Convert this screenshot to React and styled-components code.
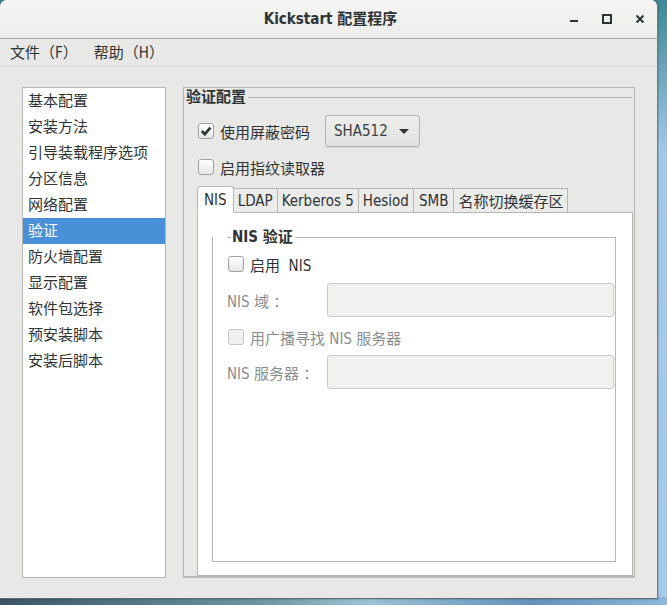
import React from "react";
import styled, { createGlobalStyle } from "styled-components";

const GlobalStyle = createGlobalStyle`
  html, body { margin: 0; padding: 0; }
  body {
    width: 667px;
    height: 605px;
    overflow: hidden;
    background:
      linear-gradient(90deg, #3b5566 0%, #6f97a6 40%, #9bc3d3 55%, #6591bd 80%, #8db8dc 100%) bottom / 100% 8px no-repeat,
      linear-gradient(180deg, #3f8796 0%, #a3c8e6 25%, #a6cae7 100%);
    font-family: "DejaVu Sans Condensed", "DejaVu Sans", "Noto Sans CJK SC", sans-serif;
    font-size: 15px;
    color: #2e3436;
  }
`;

const Window = styled.div`
  width: 658px;
  height: 599px;
  box-sizing: border-box;
  background: #e8e8e7;
  border-radius: 7px 7px 0 0;
  border-right: 1px solid #6f7f88;
  border-bottom: 1px solid #5d6d76;
  box-shadow: 0 0 2px rgba(0, 0, 0, 0.45);
  display: flex;
  flex-direction: column;
  overflow: hidden;
`;

const TitleBar = styled.div`
  height: 38px;
  flex: none;
  display: grid;
  grid-template-columns: 1fr auto 1fr;
  align-items: center;
  background: linear-gradient(#f5f5f4, #ededec);
  border-bottom: 1px solid #a4a4a2;
`;

const Title = styled.div`
  grid-column: 2;
  font-weight: bold;
  font-size: 15px;
  line-height: 18px;
  padding-left: 4px;
`;

const Controls = styled.div`
  justify-self: end;
  display: flex;
  padding-right: 1px;
`;

const Control = styled.div`
  width: 33px;
  height: 38px;
  display: flex;
  align-items: center;
  justify-content: center;
`;

const MenuBar = styled.div`
  height: 27px;
  flex: none;
  display: flex;
  align-items: center;
  padding-left: 2px;
  border-bottom: 1px solid #d6d6d4;
`;

const MenuItem = styled.div`
  padding: 0 8px;
  line-height: 20px;
`;

const Content = styled.div`
  flex: 1;
  min-height: 0;
  display: flex;
  gap: 17px;
  padding: 20px 22px 20px 22px;
`;

const SideList = styled.div`
  width: 144px;
  flex: none;
  box-sizing: border-box;
  background: #fff;
  border: 1px solid #b6b6b3;
`;

const SideItem = styled.div`
  height: 26px;
  line-height: 26px;
  padding-left: 5px;
  background: ${(p) => (p.$selected ? "#4a90d9" : "transparent")};
  color: ${(p) => (p.$selected ? "#fff" : "#2e3436")};
`;

const MainBox = styled.div`
  flex: 1;
  min-width: 0;
  display: flex;
  flex-direction: column;
  border: 1px solid #b6b6b3;
  border-bottom-width: 2px;
`;

const AuthFrame = styled.div`
  flex: 1;
  min-height: 0;
  display: flex;
  flex-direction: column;
  padding-left: 13px;
`;

const FrameHead = styled.div`
  display: flex;
  align-items: center;
  height: 18px;
  flex: none;
  margin: ${(p) => p.$margin || "0"};
  &::before {
    content: "";
    width: ${(p) => p.$tick || 1}px;
    border-top: 1px solid #b6b6b3;
  }
  &::after {
    content: "";
    flex: 1;
    border-top: 1px solid #b6b6b3;
  }
`;

const FrameTitle = styled.span`
  font-weight: bold;
  padding: 0 2px 0 1px;
  line-height: 18px;
`;

const Row = styled.div`
  display: flex;
  align-items: center;
  height: ${(p) => p.$h || 24}px;
  margin-top: ${(p) => p.$mt || 0}px;
  padding-left: ${(p) => p.$pl || 0}px;
  white-space: pre;
  color: ${(p) => (p.$disabled ? "#8b8e8f" : "#2e3436")};
`;

const Box = styled.span`
  width: 14px;
  height: 14px;
  flex: none;
  margin-right: 6px;
  border: 1px solid ${(p) => (p.$disabled ? "#c7c7c5" : "#a1a19f")};
  border-radius: 3px;
  background: ${(p) =>
    p.$disabled ? "#f0f0ef" : "linear-gradient(#ffffff, #e6e6e5)"};
  display: flex;
  align-items: center;
  justify-content: center;
`;

const Combo = styled.div`
  width: 95px;
  height: 32px;
  box-sizing: border-box;
  margin-left: 15px;
  padding: 0 10px 0 8px;
  display: flex;
  align-items: center;
  justify-content: space-between;
  border: 1px solid #b3b3b1;
  border-radius: 3px;
  background: linear-gradient(#eeeeed, #e1e1e0);
  box-shadow: 0 1px 0 rgba(0, 0, 0, 0.08);
  color: #3b4143;
`;

const Arrow = styled.span`
  width: 0;
  height: 0;
  border-left: 5px solid transparent;
  border-right: 5px solid transparent;
  border-top: 5px solid #2e3436;
`;

const Notebook = styled.div`
  flex: 1;
  min-height: 0;
  display: flex;
  flex-direction: column;
  margin-top: 7px;
  margin-right: 1px;
`;

const TabStrip = styled.div`
  display: flex;
  align-items: flex-end;
  height: 27px;
  flex: none;
  &::after {
    content: "";
    flex: 1;
    border-bottom: 1px solid #b6b6b3;
  }
`;

const Tab = styled.div`
  box-sizing: border-box;
  height: ${(p) => (p.$active ? 27 : 25)}px;
  padding: 0 ${(p) => p.$px || 4}px;
  display: flex;
  align-items: center;
  border: 1px solid #b6b6b3;
  border-left: ${(p) => (p.$first ? "1px solid #b6b6b3" : "none")};
  border-bottom: ${(p) => (p.$active ? "1px solid #fff" : "1px solid #b6b6b3")};
  border-radius: ${(p) => (p.$active ? "3px 3px 0 0" : "0")};
  background: ${(p) => (p.$active ? "#fff" : "#ebebea")};
  white-space: nowrap;
`;

const Panel = styled.div`
  flex: 1;
  min-height: 0;
  display: flex;
  flex-direction: column;
  background: #fff;
  border: 1px solid #b6b6b3;
  border-top: none;
  padding: 15px 16px 13px 14px;
`;

const NisFrame = styled.div`
  flex: 1;
  margin-top: 9px;
  border: 1px solid #b6b6b3;
  border-top: none;
  padding: 0 1px 0 15px;
`;

const FormGrid = styled.div`
  display: grid;
  grid-template-columns: 99px 1fr;
  grid-template-rows: 24px 34px 24px 34px;
  row-gap: 7px;
  margin-top: 6px;
  & > :nth-child(4) {
    margin-top: 1px;
  }
`;

const Wide = styled(Row)`
  grid-column: 1 / 3;
  margin-top: ${(p) => p.$mt || 0}px;
`;

const FieldLabel = styled.div`
  display: flex;
  align-items: center;
  color: #8b8e8f;
  margin-left: -1px;
  white-space: pre;
`;

const Entry = styled.div`
  box-sizing: border-box;
  height: 34px;
  border: 1px solid #cbcbc8;
  border-radius: 3px;
  background: #f1f1f0;
`;

function Check({ checked, disabled }) {
  return (
    <Box $disabled={disabled}>
      {checked && (
        <svg width="12" height="12" viewBox="0 0 12 12">
          <path
            d="M1.8 6 L4.8 9.2 L10.4 2.6"
            fill="none"
            stroke="#2e3436"
            strokeWidth="2.6"
            strokeLinejoin="miter"
          />
        </svg>
      )}
    </Box>
  );
}

const sideItems = [
  "基本配置",
  "安装方法",
  "引导装载程序选项",
  "分区信息",
  "网络配置",
  "验证",
  "防火墙配置",
  "显示配置",
  "软件包选择",
  "预安装脚本",
  "安装后脚本",
];

const tabs = [
  { label: "NIS", px: 6 },
  { label: "LDAP", px: 4 },
  { label: "Kerberos 5", px: 4 },
  { label: "Hesiod", px: 4 },
  { label: "SMB", px: 5 },
  { label: "名称切换缓存区", px: 4 },
];

export default function App() {
  return (
    <>
      <GlobalStyle />
      <Window>
        <TitleBar>
          <Title>Kickstart 配置程序</Title>
          <Controls>
            <Control>
              <svg width="10" height="10" viewBox="0 0 10 10">
                <rect x="1" y="6" width="8" height="2" fill="#2e3436" />
              </svg>
            </Control>
            <Control>
              <svg width="10" height="10" viewBox="0 0 10 10">
                <rect x="1" y="1" width="8" height="8" fill="none" stroke="#2e3436" strokeWidth="2" />
              </svg>
            </Control>
            <Control>
              <svg width="10" height="10" viewBox="0 0 10 10">
                <path d="M1.5 1.5 L8.5 8.5 M8.5 1.5 L1.5 8.5" stroke="#2e3436" strokeWidth="2" />
              </svg>
            </Control>
          </Controls>
        </TitleBar>
        <MenuBar>
          <MenuItem>文件（F）</MenuItem>
          <MenuItem>帮助（H）</MenuItem>
        </MenuBar>
        <Content>
          <SideList>
            {sideItems.map((s) => (
              <SideItem key={s} $selected={s === "验证"}>
                {s}
              </SideItem>
            ))}
          </SideList>
          <MainBox>
            <AuthFrame>
              <FrameHead $margin="0 2px 0 -13px" $tick={1}>
                <FrameTitle>验证配置</FrameTitle>
              </FrameHead>
              <Row $h={32} $mt={9} $pl={1}>
                <Check checked />
                使用屏蔽密码
                <Combo>
                  <span>SHA512</span>
                  <Arrow />
                </Combo>
              </Row>
              <Row $mt={8} $pl={1}>
                <Check />
                启用指纹读取器
              </Row>
              <Notebook>
                <TabStrip>
                  {tabs.map((t, i) => (
                    <Tab key={t.label} $active={i === 0} $first={i === 0} $px={t.px}>
                      {t.label}
                    </Tab>
                  ))}
                </TabStrip>
                <Panel>
                  <NisFrame>
                    <FrameHead $margin="-9px -1px 0" $tick={4}>
                      <FrameTitle>NIS 验证</FrameTitle>
                    </FrameHead>
                    <FormGrid>
                      <Wide>
                        <Check />
                        启用  NIS
                      </Wide>
                      <FieldLabel>NIS 域 ：</FieldLabel>
                      <Entry />
                      <Wide $disabled>
                        <Check disabled />
                        用广播寻找 NIS 服务器
                      </Wide>
                      <FieldLabel>NIS 服务器 ：</FieldLabel>
                      <Entry />
                    </FormGrid>
                  </NisFrame>
                </Panel>
              </Notebook>
            </AuthFrame>
          </MainBox>
        </Content>
      </Window>
    </>
  );
}
